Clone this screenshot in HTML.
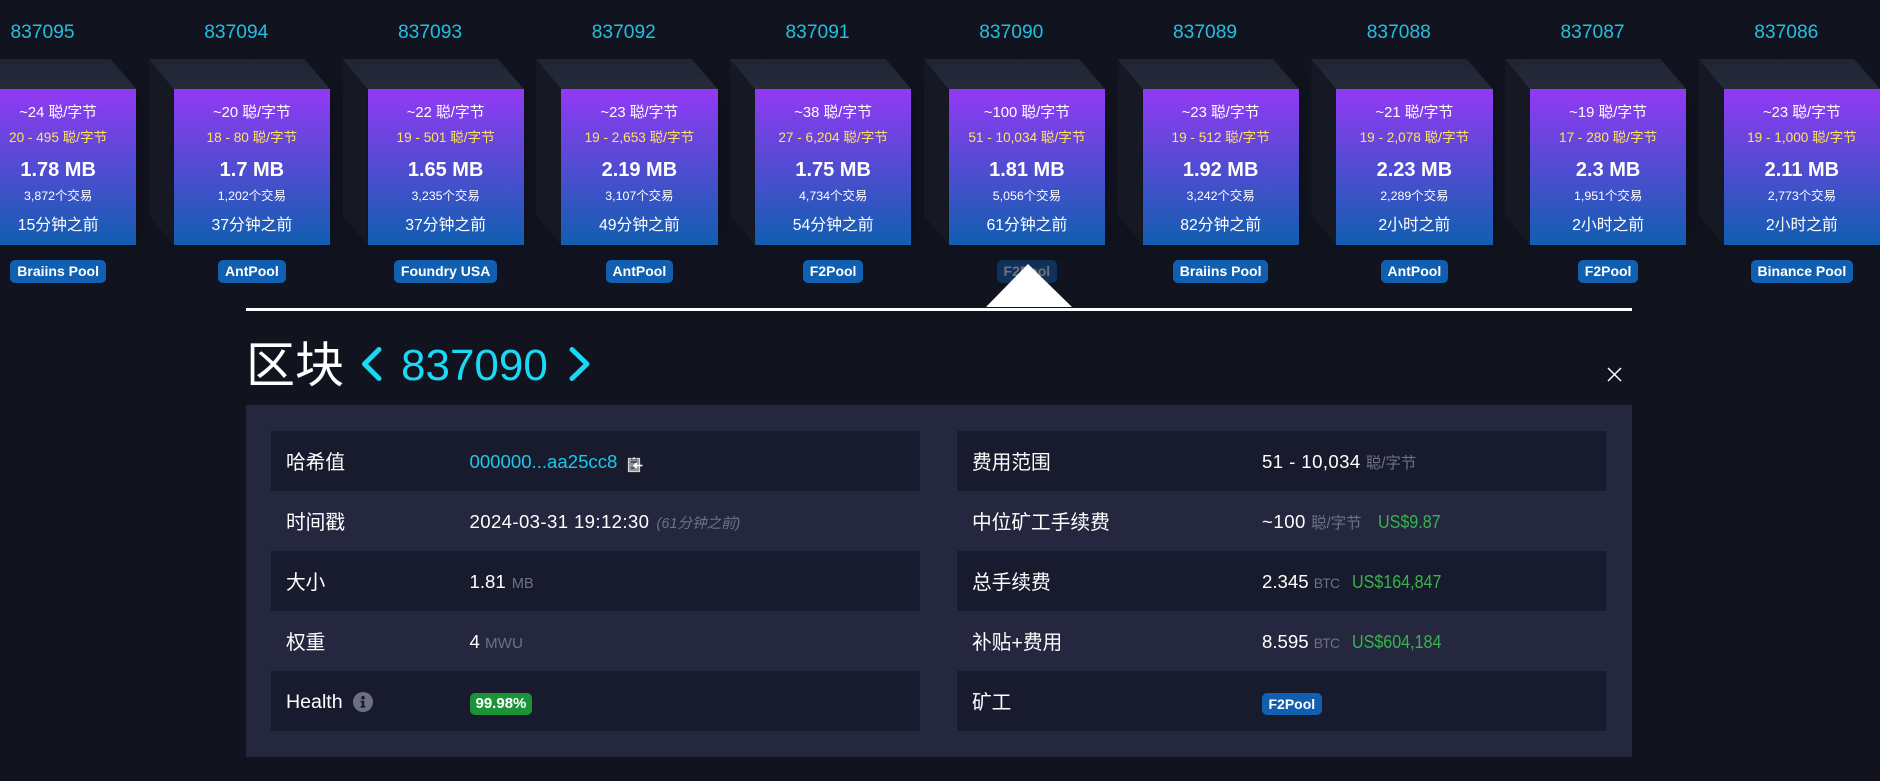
<!DOCTYPE html>
<html lang="zh-CN">
<head>
<meta charset="utf-8">
<title>区块 837090</title>
<style>
*{box-sizing:border-box}
html,body{margin:0;padding:0;width:1880px;height:781px;overflow:hidden;background:#11131f;color:#fff;font-family:"Liberation Sans","Noto Sans CJK SC",sans-serif}
.abs{position:absolute}
.b{position:absolute;top:89px;width:156.25px;height:156.25px;background:linear-gradient(#9339f4,#105fb0);box-shadow:0 0 15px rgba(0,0,0,.3)}
.b .n{position:absolute;left:-15.6px;top:-71px;width:156.25px;text-align:center;font-size:19.2px;line-height:26px;padding-top:2px;height:28px;color:#22c0df}
.b .top{position:absolute;left:-25px;top:-30px;width:181.25px;height:30px;background:linear-gradient(#202535,#262b3c);clip-path:polygon(0 0,155.5px 0,100% 100%,25px 100%)}
.b .left{position:absolute;left:-25px;top:-30px;width:25px;height:186.25px;background:#161924;clip-path:polygon(0 0,100% 30px,100% 100%,0 156px)}
.b div.l{position:absolute;left:-10px;right:-10px;text-align:center;white-space:nowrap;height:20px;line-height:20px}
.fee{top:13.5px;font-size:14.8px}
.rng{top:39px;font-size:13.6px;color:#ffe45c}
.sz{top:71px;font-size:20px;font-weight:700}
.tx{top:97px;font-size:12.4px}
.tm{top:127px;font-size:15.8px}
.p{position:absolute;left:0;width:156.25px;top:171px;text-align:center}
.p span,.badge{display:inline-block;height:23px;line-height:23px;padding:0 7px;border-radius:5px;background:#105fb0;color:#fff;font-size:14px;font-weight:700;white-space:nowrap}
#panel{position:absolute;left:245.5px;top:405px;width:1386.5px;height:351.5px;background:#24273e}
.row{position:absolute;width:649px;height:60px;left:0}
.row.d{background:#181b2d}
.row .k{position:absolute;left:15px;top:2px;line-height:60px;font-size:19.7px;white-space:nowrap}
.row .v{position:absolute;top:1px;line-height:60px;font-size:18.6px;white-space:nowrap}
.u{color:#6e7084;font-size:15.4px}
.e{color:#6e7084;font-size:14px;letter-spacing:-.8px}
.g{display:inline-block;color:#36b44c;margin-left:8px;transform:scaleX(.865);transform-origin:0 50%}
.c1 .v{left:198.5px}
.c2 .v{left:305px}
.row .v.bd{top:22px;line-height:0}
.bd .badge{display:block;height:22px;line-height:22px;padding:0 6.5px}
</style>
</head>
<body>

<div class="b" style="left:-20px"><div class="left"></div><div class="top"></div><div class="n">837095</div>
<div class="l fee">~24 聪/字节</div><div class="l rng">20 - 495 聪/字节</div><div class="l sz">1.78 MB</div><div class="l tx">3,872个交易</div><div class="l tm">15分钟之前</div><div class="p"><span>Braiins Pool</span></div></div>

<div class="b" style="left:173.75px"><div class="left"></div><div class="top"></div><div class="n">837094</div>
<div class="l fee">~20 聪/字节</div><div class="l rng">18 - 80 聪/字节</div><div class="l sz">1.7 MB</div><div class="l tx">1,202个交易</div><div class="l tm">37分钟之前</div><div class="p"><span>AntPool</span></div></div>

<div class="b" style="left:367.5px"><div class="left"></div><div class="top"></div><div class="n">837093</div>
<div class="l fee">~22 聪/字节</div><div class="l rng">19 - 501 聪/字节</div><div class="l sz">1.65 MB</div><div class="l tx">3,235个交易</div><div class="l tm">37分钟之前</div><div class="p"><span>Foundry USA</span></div></div>

<div class="b" style="left:561.25px"><div class="left"></div><div class="top"></div><div class="n">837092</div>
<div class="l fee">~23 聪/字节</div><div class="l rng">19 - 2,653 聪/字节</div><div class="l sz">2.19 MB</div><div class="l tx">3,107个交易</div><div class="l tm">49分钟之前</div><div class="p"><span>AntPool</span></div></div>

<div class="b" style="left:755px"><div class="left"></div><div class="top"></div><div class="n">837091</div>
<div class="l fee">~38 聪/字节</div><div class="l rng">27 - 6,204 聪/字节</div><div class="l sz">1.75 MB</div><div class="l tx">4,734个交易</div><div class="l tm">54分钟之前</div><div class="p"><span>F2Pool</span></div></div>

<div class="b" style="left:948.75px"><div class="left"></div><div class="top"></div><div class="n">837090</div>
<div class="l fee">~100 聪/字节</div><div class="l rng">51 - 10,034 聪/字节</div><div class="l sz">1.81 MB</div><div class="l tx">5,056个交易</div><div class="l tm">61分钟之前</div><div class="p"><span style="opacity:.4">F2Pool</span></div></div>

<div class="b" style="left:1142.5px"><div class="left"></div><div class="top"></div><div class="n">837089</div>
<div class="l fee">~23 聪/字节</div><div class="l rng">19 - 512 聪/字节</div><div class="l sz">1.92 MB</div><div class="l tx">3,242个交易</div><div class="l tm">82分钟之前</div><div class="p"><span>Braiins Pool</span></div></div>

<div class="b" style="left:1336.25px"><div class="left"></div><div class="top"></div><div class="n">837088</div>
<div class="l fee">~21 聪/字节</div><div class="l rng">19 - 2,078 聪/字节</div><div class="l sz">2.23 MB</div><div class="l tx">2,289个交易</div><div class="l tm">2小时之前</div><div class="p"><span>AntPool</span></div></div>

<div class="b" style="left:1530px"><div class="left"></div><div class="top"></div><div class="n">837087</div>
<div class="l fee">~19 聪/字节</div><div class="l rng">17 - 280 聪/字节</div><div class="l sz">2.3 MB</div><div class="l tx">1,951个交易</div><div class="l tm">2小时之前</div><div class="p"><span>F2Pool</span></div></div>

<div class="b" style="left:1723.75px"><div class="left"></div><div class="top"></div><div class="n">837086</div>
<div class="l fee">~23 聪/字节</div><div class="l rng">19 - 1,000 聪/字节</div><div class="l sz">2.11 MB</div><div class="l tx">2,773个交易</div><div class="l tm">2小时之前</div><div class="p"><span>Binance Pool</span></div></div>

<!-- arrow + divider -->
<svg class="abs" style="left:980px;top:260px" width="100" height="48" viewBox="0 0 100 48"><polygon points="48,4 92,47 6,47" fill="#fff"/></svg>
<div class="abs" style="left:245.5px;top:308px;width:1386.5px;height:3px;background:#fff"></div>

<!-- title -->
<div class="abs" style="left:246px;top:336px;font-size:49px;line-height:60px;white-space:nowrap">区块</div>
<svg class="abs" style="left:359px;top:345px" width="26" height="38" viewBox="0 0 26 38"><path d="M20 4.5 L5.5 19 L20 33.5" fill="none" stroke="#1bd8f4" stroke-width="5" stroke-linecap="round" stroke-linejoin="round"/></svg>
<div class="abs" style="left:401px;top:336px;font-size:44px;line-height:60px;color:#1bd8f4;white-space:nowrap">837090</div>
<svg class="abs" style="left:567px;top:345px" width="26" height="38" viewBox="0 0 26 38"><path d="M5 4.5 L20 19 L5 33.5" fill="none" stroke="#1bd8f4" stroke-width="5" stroke-linecap="round" stroke-linejoin="round"/></svg>
<svg class="abs" style="left:1606px;top:366px" width="17" height="17" viewBox="0 0 17 17"><path d="M2 2 L15 15 M15 2 L2 15" stroke="#fff" stroke-width="1.5" fill="none"/></svg>

<!-- panel -->
<div id="panel">
  <div class="row d c1" style="left:25.5px;top:26px"><div class="k">哈希值</div><div class="v" style="color:#1bc8e8">000000...aa25cc8</div>
    <svg class="abs" style="left:356px;top:24px" width="16" height="18" viewBox="0 0 16 18"><path d="M1.5 3.5h11v13h-11z" fill="#8f8f96" stroke="#d4d4d8" stroke-width="1.2"/><path d="M4.5 4.5V2.8h1.4a1.3 1.3 0 0 1 2.4 0h1.4v1.7z" fill="#e4e4e8" stroke="#181b2d" stroke-width=".5"/><path d="M4 7h6M4 13h3" stroke="#2a2c38" stroke-width="1.2"/><path d="M15.5 10.5H7M10 8l-3 2.5 3 2.5" stroke="#fff" stroke-width="1.6" fill="none"/></svg>
  </div>
  <div class="row c1" style="left:25.5px;top:86px"><div class="k">时间戳</div><div class="v"><span style="letter-spacing:.38px">2024-03-31 19:12:30</span> <i style="color:#6e7084;font-size:14.5px;margin-left:2px">(61分钟之前)</i></div></div>
  <div class="row d c1" style="left:25.5px;top:146px"><div class="k">大小</div><div class="v">1.81 <span class="u" style="font-size:14.5px;margin-left:1px">MB</span></div></div>
  <div class="row c1" style="left:25.5px;top:206px"><div class="k">权重</div><div class="v">4 <span class="u" style="font-size:15.2px">MWU</span></div></div>
  <div class="row d c1" style="left:25.5px;top:266px"><div class="k" style="font-size:19.6px;top:1px">Health</div>
    <svg class="abs" style="left:82px;top:21px" width="20" height="20" viewBox="0 0 20 20"><circle cx="10" cy="10" r="10" fill="#6c6f80"/><circle cx="10" cy="5.7" r="1.8" fill="#181b2d"/><path d="M7.6 8.7h3.6v5.2h1.2v1.7H7.6v-1.7h1.2v-3.5H7.6z" fill="#181b2d"/></svg>
    <div class="v bd"><span class="badge" style="background:#1a9436;padding:0 6px;font-size:15px">99.98%</span></div>
  </div>

  <div class="row d c2" style="left:711.5px;top:26px"><div class="k">费用范围</div><div class="v"><span style="letter-spacing:.42px">51 - 10,034</span> <span class="u">聪/字节</span></div></div>
  <div class="row c2" style="left:711.5px;top:86px"><div class="k">中位矿工手续费</div><div class="v"><span style="letter-spacing:.5px">~100</span> <span class="u">聪/字节</span> <span class="g" style="margin-left:11px">US$9.87</span></div></div>
  <div class="row d c2" style="left:711.5px;top:146px"><div class="k">总手续费</div><div class="v">2.345 <span class="e">BTC</span> <span class="g">US$164,847</span></div></div>
  <div class="row c2" style="left:711.5px;top:206px"><div class="k">补贴+费用</div><div class="v">8.595 <span class="e">BTC</span> <span class="g">US$604,184</span></div></div>
  <div class="row d c2" style="left:711.5px;top:266px"><div class="k">矿工</div><div class="v bd"><span class="badge">F2Pool</span></div></div>
</div>

</body>
</html>
